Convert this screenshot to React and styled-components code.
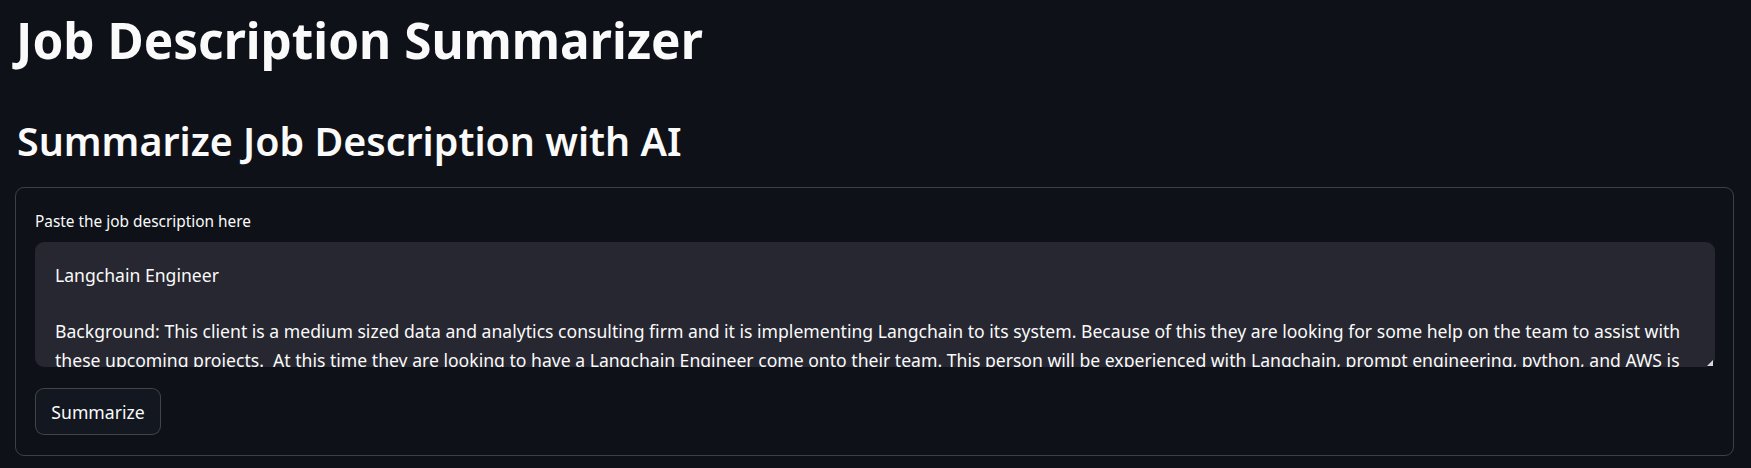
import React from "react";
import styled, { createGlobalStyle } from "styled-components";

const Global = createGlobalStyle`
  html, body {
    margin: 0;
    padding: 0;
    background: #0e1117;
  }
  body {
    font-family: "Noto Sans", Lato, sans-serif;
    color: #fafafa;
  }
`;

const Page = styled.main`
  display: flex;
  flex-direction: column;
  padding: 10px 17px 0 15px;
`;

const Title = styled.h1`
  margin: 0 0 0 1px;
  font-size: 49.5px;
  line-height: 60px;
  font-weight: 700;
  color: #fafafa;
`;

const Subtitle = styled.h2`
  margin: 46px 0 0 2px;
  font-size: 39.4px;
  line-height: 50px;
  font-weight: 600;
  color: #fafafa;
`;

const Form = styled.form`
  margin-top: 21px;
  border: 1px solid rgba(250, 250, 250, 0.2);
  border-radius: 9px;
  padding: 24px 18px 20px 19px;
  display: flex;
  flex-direction: column;
`;

const Label = styled.label`
  font-size: 15.4px;
  line-height: 20px;
  color: #fafafa;
  margin-bottom: 10px;
`;

const AreaWrap = styled.div`
  position: relative;
`;

const TextArea = styled.textarea`
  display: block;
  width: 100%;
  height: 125px;
  box-sizing: border-box;
  margin: 0;
  padding: 19px 14px 0 20px;
  background: #262730;
  color: #fafafa;
  border: none;
  border-radius: 9px;
  font-family: "Noto Sans", Lato, sans-serif;
  font-size: 17.6px;
  line-height: 28.2px;
  resize: none;
  overflow: hidden;
  outline: none;
`;

const Grip = styled.span`
  position: absolute;
  right: 2px;
  bottom: 1px;
  width: 0;
  height: 0;
  border-left: 6px solid transparent;
  border-bottom: 6px solid #d8d8dc;
`;

const Button = styled.button`
  align-self: flex-start;
  margin-top: 21px;
  height: 47px;
  width: 126px;
  padding: 0;
  background: #131720;
  color: #fafafa;
  border: 1px solid rgba(250, 250, 250, 0.2);
  border-radius: 9px;
  font-family: "Noto Sans", Lato, sans-serif;
  font-size: 17.6px;
  cursor: pointer;
`;

const jobText = `Langchain Engineer

Background: This client is a medium sized data and analytics consulting firm and it is implementing Langchain to its system. Because of this they are looking for some help on the team to assist with these upcoming projects.  At this time they are looking to have a Langchain Engineer come onto their team. This person will be experienced with Langchain, prompt engineering, python, and AWS is preferred. This role is remote and will run for several months with possible extension.`;

export default function App() {
  return (
    <>
      <Global />
      <Page>
        <Title>Job Description Summarizer</Title>
        <Subtitle>Summarize Job Description with AI</Subtitle>
        <Form onSubmit={(e) => e.preventDefault()}>
          <Label htmlFor="jd">Paste the job description here</Label>
          <AreaWrap>
            <TextArea id="jd" defaultValue={jobText} />
            <Grip />
          </AreaWrap>
          <Button type="submit">Summarize</Button>
        </Form>
      </Page>
    </>
  );
}
